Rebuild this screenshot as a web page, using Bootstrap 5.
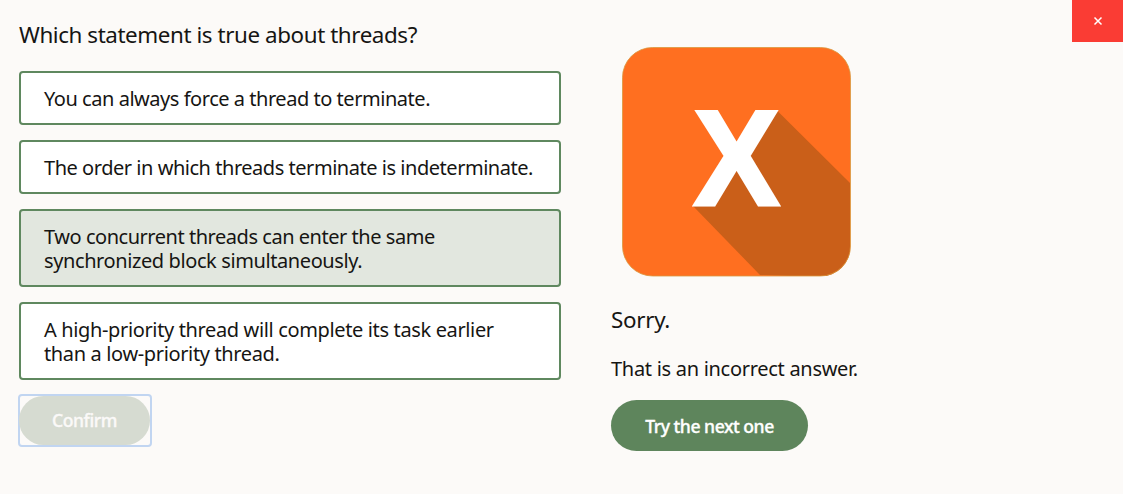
<!DOCTYPE html>
<html lang="en">
<head>
<meta charset="utf-8">
<meta name="viewport" content="width=device-width, initial-scale=1">
<title>Quiz</title>
<link href="https://cdn.jsdelivr.net/npm/bootstrap@5.3.0/dist/css/bootstrap.min.css" rel="stylesheet">
<style>
body{background:#fcfaf8;color:#161513;font-family:"Noto Sans","Open Sans",sans-serif;height:494px;overflow:hidden}
.quiz{padding:19px 0 0 19px}
.answers-col{width:541.500px;margin-right:50.500px}
.question{font-size:22.4px;line-height:32px;margin-bottom:20px;letter-spacing:-.42px}
.answers{gap:15px}
.answer{background:#fff;border:2px solid #5f885f;border-radius:4px;padding:14px 0 12px 23px;font-size:20px;line-height:24px;text-align:left;color:#161513}
.answer.chosen{background:#e2e7df}
.answer span{display:block;white-space:nowrap;letter-spacing:-.465px}
.answer .open{letter-spacing:-.4px}
.answer .wide{letter-spacing:-.36px}
.pill{border:0;border-radius:26px;height:51px;color:#fff;font-size:17.6px;font-weight:500;padding:0;background:#5e855c;letter-spacing:-.48px;-webkit-text-stroke:.35px currentColor}
.focus-frame{border:2px solid #c1d5f1;border-radius:4px;width:134px;height:53px;margin:14px 0 0 -1px}
.focus-frame .pill{width:131px;height:49px;margin-left:-1px;background:#d6dbd1;color:#fbf9f8;border-radius:24.5px;letter-spacing:-.45px}
.result{padding-top:28px}
.result svg{display:block;margin-left:11px}
.sorry{font-size:22.4px;line-height:32px;margin:27px 0 0;letter-spacing:-.3px}
.msg{font-size:20px;line-height:24px;margin:21px 0 19px;letter-spacing:-.29px}
.next{width:197px;padding-top:1px}
.closer{width:51px;height:42px;background:#fa3c34}
</style>
</head>
<body>
<div class="d-flex align-items-start">
<main class="quiz d-flex flex-grow-1 align-items-start">
  <section class="answers-col flex-shrink-0">
    <h1 class="question fw-normal">Which statement is true about threads?</h1>
    <div class="answers d-grid">
      <button class="answer"><span>You can always force a thread to terminate.</span></button>
      <button class="answer"><span>The order in which threads terminate is indeterminate.</span></button>
      <button class="answer chosen"><span>Two concurrent threads can enter the same</span><span class="open">synchronized block simultaneously.</span></button>
      <button class="answer"><span class="wide">A high-priority thread will complete its task earlier</span><span class="wide">than a low-priority thread.</span></button>
    </div>
    <div class="focus-frame"><button class="pill d-block">Confirm</button></div>
  </section>
  <section class="result">
    <svg width="229" height="230" viewBox="622 47 229 230" role="img" aria-label="Incorrect">
      <defs><clipPath id="tile"><rect x="622.5" y="47.5" width="228" height="229" rx="30"/></clipPath></defs>
      <rect x="622.5" y="47.5" width="228" height="228.500" rx="30" fill="#ff6f20"/>
      <path clip-path="url(#tile)" d="M778 111.500 850 183V276H790L760 275 693 206 736 158Z" fill="#ca5f19"/>
      <rect x="622.5" y="47.5" width="228" height="228.500" rx="30" fill="none" stroke="#d9983f" stroke-width=".8"/>
      <text x="693.500" y="204.600" font-family="Liberation Sans" font-weight="700" font-size="134.500" fill="#fff" stroke="#fff" stroke-width="3.200" textLength="86" lengthAdjust="spacingAndGlyphs">X</text>
    </svg>
    <h2 class="sorry fw-normal">Sorry.</h2>
    <p class="msg">That is an incorrect answer.</p>
    <button class="pill next">Try the next one</button>
  </section>
</main>
<button class="closer border-0 p-0 d-flex align-items-center justify-content-center" aria-label="Close">
  <svg width="10" height="10" viewBox="0 0 10 10"><path d="M1.500 1.500l7 7m0-7l-7 7" stroke="#fff" stroke-width="1.500" fill="none"/></svg>
</button>
</div>
<script src="https://cdn.jsdelivr.net/npm/bootstrap@5.3.0/dist/js/bootstrap.bundle.min.js"></script>
</body>
</html>
